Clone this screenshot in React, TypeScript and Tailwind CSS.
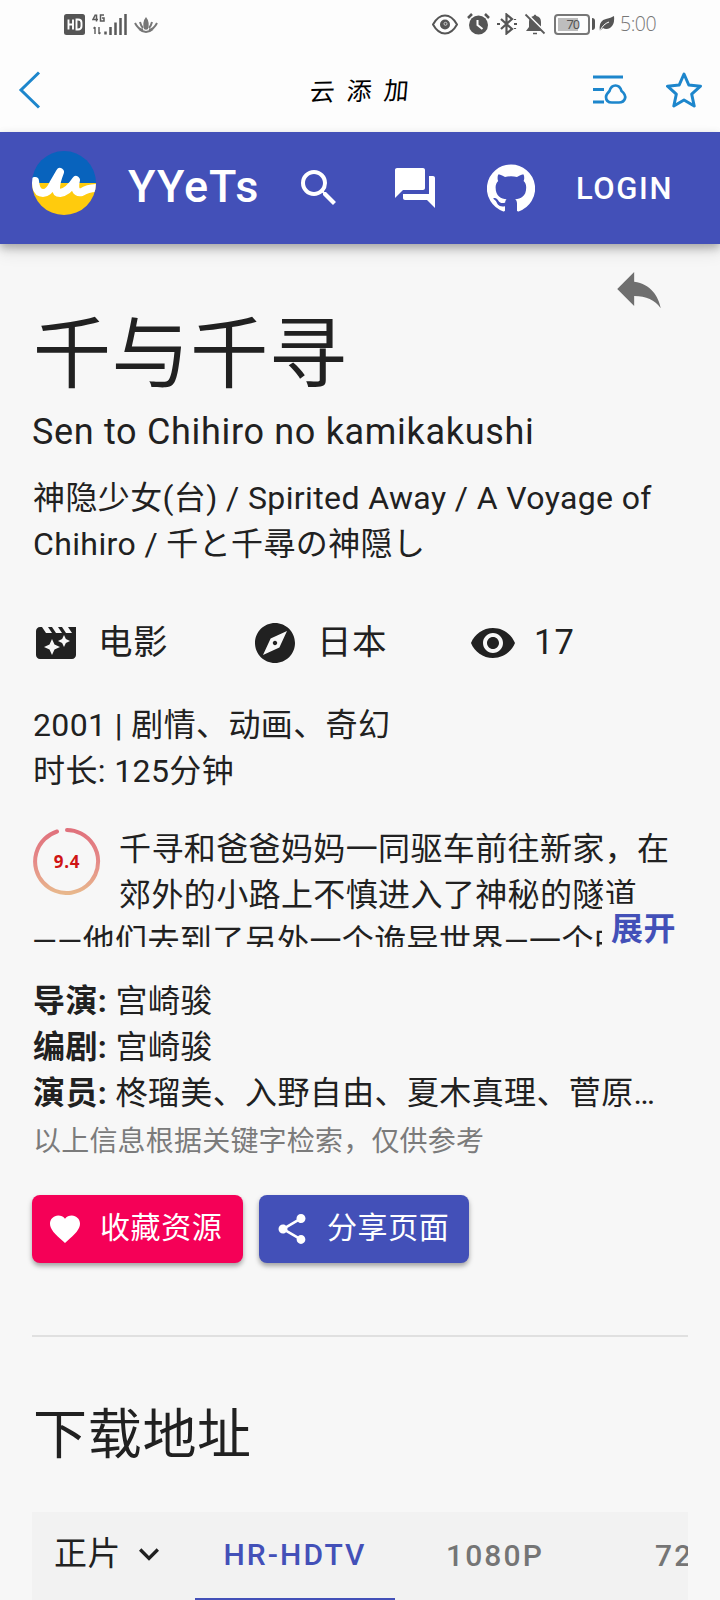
import React from "react";
import {
  MdSearch,
  MdForum,
  MdReply,
  MdMovieFilter,
  MdExplore,
  MdVisibility,
  MdFavorite,
  MdShare,
  MdExpandMore,
} from "react-icons/md";

function StatusBar() {
  return (
    <div className="flex h-12 items-center pl-16 pr-16 text-[#5a5a5a]">
      <svg className="h-[21px] w-[21px]" viewBox="0 0 21 21">
        <rect width="21" height="21" rx="2.5" fill="#555" />
        <path d="M4.500 5.500v10M9 5.500v10M4.500 10.500H9M12.500 5.500v10h1.500q3.500 0 3.500-3.200v-3.600q0-3.200-3.500-3.200z" fill="none" stroke="#fff" strokeWidth="1.900" />
      </svg>
      <svg className="ml-[7px] h-[23px] w-[36px]" viewBox="0 0 36 23" fill="none" stroke="#5a5a5a">
        <path d="M3.500 1.500L1 6.500h5M4.500 1.500v7M12 2H8.500v6H12V5h-2" strokeWidth="1.500" />
        <path d="M3 14v7M1.500 15.500L3 14M7 14v7M7 21l1.500-1.500" strokeWidth="1.400" />
        <path d="M13.500 18.500v3M18.500 14v8M23.500 9.500V22M28.500 5v17M33.500 1v21" strokeWidth="2.500" />
      </svg>
      <svg className="ml-1.5 mt-0.5 h-[18px] w-[24px]" viewBox="0 0 24 18" fill="#777">
        <path d="M12 1Q16 6 14 13Q12 14.500 10 13Q8 6 12 1z" />
        <path d="M1 7Q4 13 9 14M23 7q-3 6-8 7M5 13q7 6 14 0M6 6q1 4 3 6M18 6q-1 4-3 6" fill="none" stroke="#777" strokeWidth="2" />
      </svg>
      <div className="ml-auto flex items-center">
        <svg className="h-[21px] w-[26px]" viewBox="0 0 26 21" fill="none" stroke="#555" strokeWidth="2">
          <path d="M1 10.500Q6 1.500 13 1.500T25 10.500Q20 19.500 13 19.500T1 10.500z" />
          <circle cx="13" cy="10.500" r="5" fill="#555" stroke="none" />
          <circle cx="13.500" cy="9.800" r="1.500" stroke="#ccc" strokeWidth="1" />
        </svg>
        <svg className="ml-[9px] h-[22px] w-[23px]" viewBox="0 0 23 22">
          <circle cx="11.500" cy="12" r="9.500" fill="#555" />
          <path d="M1 5l4-4M22 5l-4-4" stroke="#555" strokeWidth="2.500" />
          <path d="M10.500 7v5l5 4" fill="none" stroke="#fff" strokeWidth="2" />
        </svg>
        <svg className="ml-[7px] h-[22px] w-[20px]" viewBox="0 0 20 22" fill="none" stroke="#555" strokeWidth="2.200">
          <path d="M4 6l11 10-5.500 4.500V1.500L15 6 4 16" />
          <path d="M0 11h3M17 11h3M18 6v1M18 15v1" />
        </svg>
        <svg className="ml-[7px] h-[22px] w-[22px]" viewBox="0 0 22 22">
          <path d="M2 18L5 14V9Q5 4 9.500 3Q11 0 12.500 3Q17 4 17 9v5l3 4z" fill="#5a5a5a" />
          <path d="M2.500 .5l19 19" stroke="#fdfdfd" strokeWidth="2" />
          <path d="M1.500 1.500l19 19" stroke="#5a5a5a" strokeWidth="1.800" />
          <path d="M9 20.500h4" stroke="#5a5a5a" strokeWidth="1.500" />
        </svg>
        <div className="ml-2 flex h-[21px] w-[36px] items-stretch rounded-[4px] border-2 border-[#777] p-[2px]">
          <div className="flex w-5 items-center justify-end bg-[#bdbdbd] font-['Roboto'] text-[13px] leading-none tracking-[-1px] text-[#555]">
            <span className="-mr-[1px]">70</span>
          </div>
        </div>
        <div className="ml-0.5 h-3 w-[3px] rounded-r bg-[#555]" />
        <svg className="ml-1 h-[16px] w-[16px]" viewBox="0 0 16 16">
          <path d="M1 15Q-1 5 7 3Q12 2 15 0Q16 9 11 12Q7 14 4 12z" fill="#555" />
          <path d="M1 15Q4 8 10 6" stroke="#fff" fill="none" />
        </svg>
        <span className="ml-[5px] w-[36px] font-['Open_Sans'] text-[19.500px] font-light leading-none tracking-[-0.5px] text-[#777]">5:00</span>
      </div>
    </div>
  );
}

function BrowserBar() {
  return (
    <div className="flex h-[84px] items-center justify-between pl-[18px] pr-[18px] text-[#1d86cc]">
      <svg className="h-[38px] w-[24px]" viewBox="0 0 24 38" fill="none" stroke="currentColor" strokeWidth="3">
        <path d="M21 1.500L3 19l18 17.500" />
      </svg>
      <div className="ml-[98px] -mt-0.5 font-['Noto_Sans_CJK_SC',sans-serif] text-[25px] leading-none tracking-[12px] text-black">
        <span className="inline-block -skew-x-6 -rotate-1">云添加</span>
      </div>
      <div className="flex items-center">
        <svg className="mr-[38px] h-[32px] w-[36px]" viewBox="0 0 36 32" fill="none" stroke="currentColor" strokeWidth="3">
          <path d="M1 3h30M1 15.500h11M1 28h11" />
          <path d="M23.500 11.500c3.500 0 5 2 6 5.500c3 2.500 4.500 4.500 3.500 7.500c-1 3-3 4-6 4h-7c-4 0-6-2-6-5.500c0-2.500 1.500-4 3.500-6c1-3.500 2.500-5.500 6-5.500z" strokeWidth="2.700" />
        </svg>
        <svg className="h-[36px] w-[36px]" viewBox="0 0 36 36" fill="none" stroke="currentColor" strokeWidth="3" strokeLinejoin="round">
          <path d="M18 2l4.800 11 11.700 1.200-8.800 8 2.500 11.800L18 28 7.800 34l2.500-11.800-8.800-8L13.200 13z" />
        </svg>
      </div>
    </div>
  );
}

function Logo() {
  return (
    <svg className="h-16 w-16" viewBox="0 0 64 64">
      <defs>
        <clipPath id="logo-disc">
          <circle cx="32" cy="32" r="32" />
        </clipPath>
      </defs>
      <g clipPath="url(#logo-disc)">
        <rect width="64" height="32" fill="#0863bd" />
        <rect y="32" width="64" height="32" fill="#ffcb0d" />
        <path d="M3 30Q4 42 11 42Q17 42 21 33L28 21Q20 42 28 42Q36 41 44 29Q41 43 50 41Q56 37 66 37" fill="none" stroke="#fff" strokeWidth="8" strokeLinecap="round" strokeLinejoin="round" />
      </g>
    </svg>
  );
}

function AppHeader() {
  return (
    <header className="relative flex h-28 items-center bg-[#4350b8] pl-8 text-white shadow-[0_4px_8px_rgba(0,0,0,0.25),0_8px_16px_rgba(0,0,0,0.1)]">
      <div className="-mt-2.5">
        <Logo />
      </div>
      <span className="-mt-[3px] ml-8 w-[167px] text-[45px] font-medium leading-none tracking-[1px]">YYeTs</span>
      <MdSearch className="h-12 w-12" />
      <MdForum className="ml-12 h-12 w-12" />
      <svg className="ml-12 h-12 w-12" viewBox="0 0 24 24" fill="currentColor">
        <path d="M12 .3a12 12 0 0 0-3.800 23.400c.6.1.8-.3.8-.6v-2c-3.300.7-4-1.600-4-1.600-.6-1.400-1.400-1.800-1.400-1.800-1-.7.1-.7.1-.7 1.200 0 1.900 1.200 1.900 1.200 1 1.800 2.800 1.300 3.500 1 0-.8.4-1.300.7-1.600-2.700-.3-5.500-1.300-5.500-6 0-1.200.5-2.300 1.300-3.100-.2-.4-.6-1.600 0-3.200 0 0 1-.3 3.400 1.200a11.500 11.500 0 0 1 6 0c2.300-1.500 3.300-1.200 3.300-1.200.6 1.600.2 2.800 0 3.200.9.8 1.300 1.900 1.300 3.200 0 4.600-2.800 5.600-5.500 5.900.5.4.9 1 .9 2.200v3.300c0 .3.1.7.8.6A12 12 0 0 0 12 .3" />
      </svg>
      <span className="ml-[41px] text-[31px] font-medium leading-none tracking-[1.600px]">LOGIN</span>
    </header>
  );
}

function Rating() {
  return (
    <div className="float-left ml-px mt-[1px] mr-[18px] grid h-[68px] w-[68px] place-items-center">
      <svg className="col-start-1 row-start-1 h-[68px] w-[68px]" viewBox="0 0 68 68">
        <defs>
          <linearGradient id="rating-ring" x1="0" y1="0" x2="0" y2="1">
            <stop offset="0" stopColor="#e0717c" />
            <stop offset="0.5" stopColor="#e58a88" />
            <stop offset="1" stopColor="#e8b78c" />
          </linearGradient>
        </defs>
        <path d="M34 3A31.500 31.500 0 1 1 24 4.500" fill="none" stroke="url(#rating-ring)" strokeWidth="4" strokeLinecap="round" />
      </svg>
      <span className="col-start-1 row-start-1 font-['Noto_Sans'] text-[17px] font-bold leading-none tracking-[0.8px] text-[#cf1414]">9.4</span>
    </div>
  );
}

function Credit({ label, value }: { label: string; value: string }) {
  return (
    <p className="max-w-[630px] truncate">
      <b>{label}:</b> {value}
    </p>
  );
}

export default function App() {
  return (
    <div
      lang="zh-CN"
      className="h-[1600px] w-[720px] overflow-hidden bg-[#f7f7f7] font-['Roboto','Noto_Sans_CJK_SC',sans-serif] text-[#212121]"
    >
      <div className="bg-[#fdfdfd]">
        <StatusBar />
        <BrowserBar />
      </div>
      <AppHeader />
      <main className="px-8 text-[32px] leading-[46px] tracking-[0.38px]">
        <div className="flex h-[72px] justify-end pr-5 pt-4">
          <MdReply className="h-[58px] w-[58px] text-[#6f6f6f]" />
        </div>
        <h1 className="h-20 pl-px text-[78px] leading-[80px] tracking-[0.6px]">千与千寻</h1>
        <h2 className="mt-2.5 h-12 text-[36px] leading-[52px] tracking-[0.68px]">Sen to Chihiro no kamikakushi</h2>
        <p className="mt-[21px] whitespace-nowrap pl-px">
          神隐少女(台) / Spirited Away / A Voyage of
          <br />
          Chihiro / 千と千尋の神隠し
        </p>
        <div className="mt-[52px] flex h-12 items-center text-[34.500px]">
          <MdMovieFilter className="h-12 w-12" />
          <span className="-mt-0.5 ml-[18px] w-[153px]">电影</span>
          <MdExplore className="h-12 w-12" />
          <span className="-mt-0.5 ml-[18px] w-[152px]">日本</span>
          <MdVisibility className="h-12 w-12" />
          <span className="-mt-0.5 ml-[17px] tracking-[1px]">17</span>
        </div>
        <div className="mt-[35px] pl-px">
          <p>2001 | 剧情、动画、奇幻</p>
          <p>时长: 125分钟</p>
        </div>
        <div className="relative mt-8 h-[121px] overflow-hidden">
          <Rating />
          <p className="whitespace-nowrap">
            千寻和爸爸妈妈一同驱车前往新家，在
            <br />
            郊外的小路上不慎进入了神秘的隧道
            <br />
            ——他们去到了另外一个诡异世界—一个中
          </p>
          <button className="absolute right-0 bottom-0 h-[43px] w-[86px] bg-[#f7f7f7] pl-[9px] text-left font-bold leading-[51px] text-[#4350b8]">展开</button>
        </div>
        <div className="mt-[31px] pl-px">
          <Credit label="导演" value="宫崎骏" />
          <Credit label="编剧" value="宫崎骏" />
          <Credit label="演员" value="柊瑠美、入野自由、夏木真理、菅原文太" />
          <p className="pt-0.5 text-[28px] leading-[48px] tracking-[0.2px] text-[#7b7b7b]">以上信息根据关键字检索，仅供参考</p>
        </div>
        <div className="mt-[29px] flex gap-4 text-[30px] text-white">
          <button className="flex h-[68px] w-[211px] items-center rounded-lg bg-[#f50057] pl-[15px] tracking-[0.6px] shadow-[0_3px_5px_rgba(0,0,0,0.35)]">
            <MdFavorite className="h-9 w-9" />
            <span className="-mt-[3px] ml-[17px]">收藏资源</span>
          </button>
          <button className="flex h-[68px] w-[210px] items-center rounded-lg bg-[#4350b8] pl-[15px] tracking-[0.6px] shadow-[0_3px_5px_rgba(0,0,0,0.35)]">
            <MdShare className="h-9 w-9" />
            <span className="-mt-[3px] ml-[17px]">分享页面</span>
          </button>
        </div>
        <hr className="mt-[72px] border-t-2 border-[#e0e0e0]" />
        <h2 className="mt-[63px] h-[72px] pl-px text-[54px] leading-[72px] tracking-[0.7px]">下载地址</h2>
        <div className="mt-10 flex h-[88px] items-center overflow-hidden bg-[#f2f2f2]">
          <div className="flex w-[163px] shrink-0 items-center pl-[22px]">
            <span className="-mt-1 text-[33px]">正片</span>
            <MdExpandMore className="-mt-1 ml-2 h-10 w-10" />
          </div>
          <div className="flex h-full w-[200px] shrink-0 items-center justify-center border-b-2 border-[#4350b8] text-[30px] font-medium tracking-[2.100px] text-[#4350b8]">
            HR-HDTV
          </div>
          <div className="w-[200px] shrink-0 text-center text-[30px] font-medium tracking-[2.100px] text-[#757575]">1080P</div>
          <div className="w-[200px] shrink-0 pl-[60px] text-[30px] font-medium tracking-[2.100px] text-[#757575]">720P</div>
        </div>
      </main>
    </div>
  );
}
